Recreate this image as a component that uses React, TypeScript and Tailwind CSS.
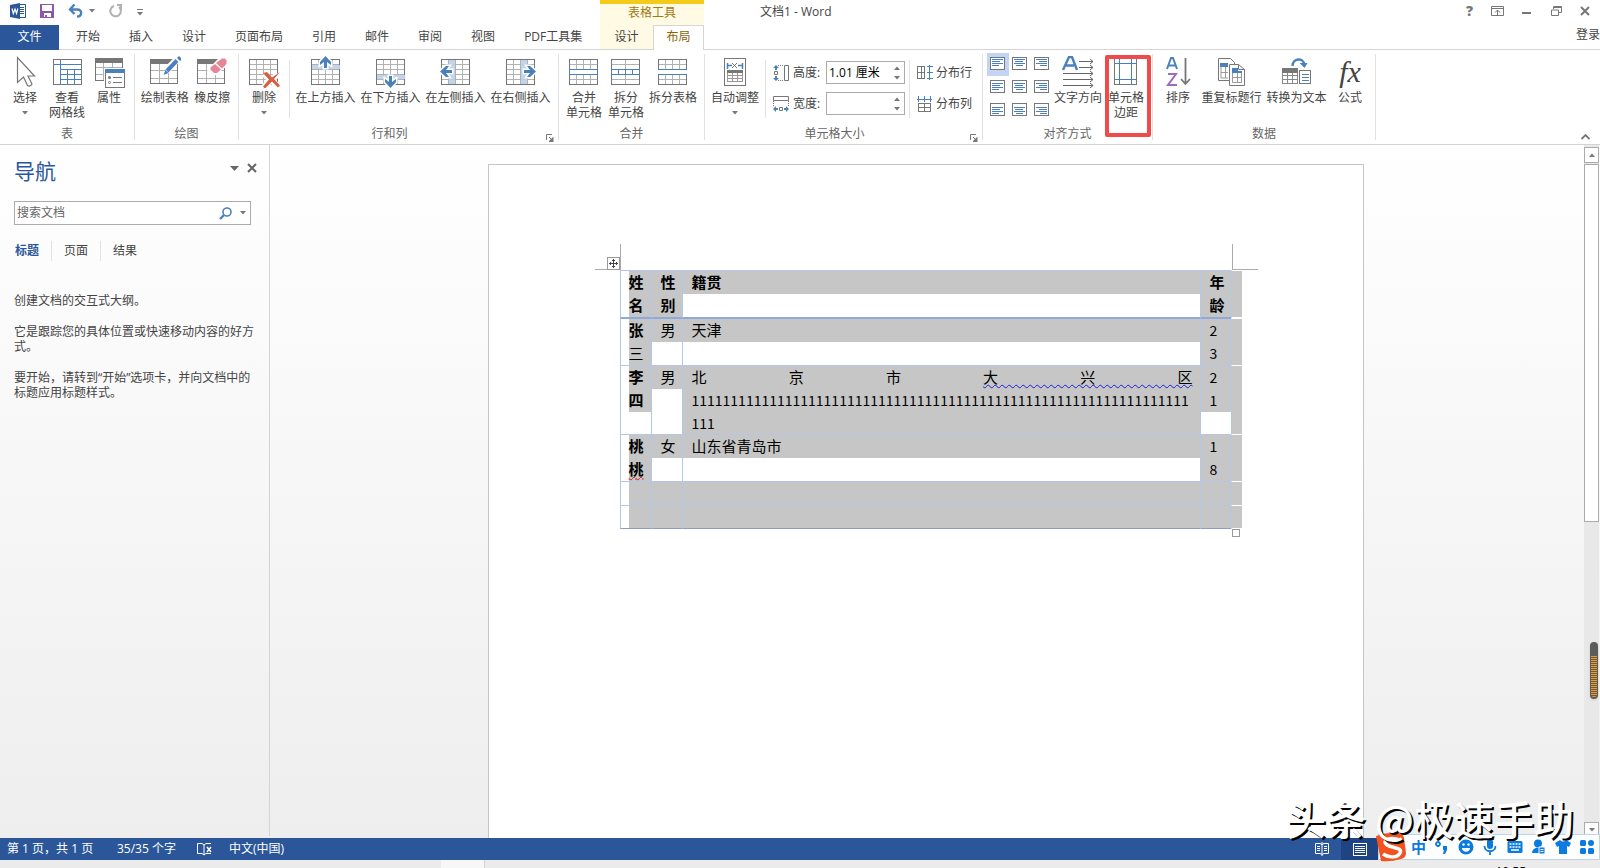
import clsx from "clsx";
import type { ReactNode } from "react";

const uiFont = "font-['Open_Sans','Noto_Sans_CJK_SC',sans-serif]";
const docFont = "font-['Noto_Sans_CJK_SC',sans-serif]";

/* ---------- icons ---------- */

function Icon({ children, size = 32 }: { children: ReactNode; size?: number }) {
  return (
    <svg width={size} height={size} viewBox={`0 0 ${size} ${size}`} fill="none" aria-hidden="true" className="shrink-0">
      {children}
    </svg>
  );
}

function Caret({ className = "" }: { className?: string }) {
  return (
    <svg width="6" height="4" viewBox="0 0 6 4" aria-hidden="true" className={clsx("shrink-0 fill-[#777]", className)}>
      <path d="M0 0h6L3 3.5z" />
    </svg>
  );
}

function Grid() {
  return (
    <g shapeRendering="crispEdges">
      <path d="M8.5 4v25M15.5 4v25M22.5 4v25M2 8.5h28M2 13.5h28M2 18.5h28M2 23.5h28" stroke="#b1b1b1" />
      <rect x="1.5" y="3.5" width="28" height="25" stroke="#777" />
    </g>
  );
}

function SelectIcon() {
  return (
    <Icon>
      <path
        d="M8.5 1.5v25l6-5.500 4 8.500q3 1.500 4.500-1.500l-4-8h6.500z"
        fill="#fff"
        stroke="#777"
        strokeWidth="1.200"
      />
    </Icon>
  );
}

function GridlinesIcon() {
  return (
    <Icon>
      <g shapeRendering="crispEdges">
        <path d="M9.500 9v20M16.500 13v16M23.500 13v16M2 8.500h28M9 13.500h21M9 18.500h21M9 23.500h21" stroke="#4a81bd" />
        <path d="M9.500 4v5" stroke="#4a81bd" />
        <rect x="2.500" y="3.500" width="28" height="25" stroke="#777" />
      </g>
    </Icon>
  );
}

function PropertiesIcon() {
  return (
    <Icon>
      <g shapeRendering="crispEdges">
        <path d="M10.500 6v19M19.500 6v9M2 11.500h27M2 18.500h11" stroke="#b1b1b1" />
        <path d="M13 24.500H2.500V5M29.500 5v8" stroke="#777" />
        <path fill="#777" d="M2 2h28v5H2z" />
        <path fill="#fff" d="M11 12h21v20H11z" />
        <rect x="12.500" y="13.500" width="19" height="18" fill="#fff" stroke="#777" />
        <path fill="#4a81bd" d="M12 13h20v4H12z" />
        <path d="M20 21.500h9M20 26.500h9" stroke="#777" />
      </g>
      <circle cx="16.500" cy="21.500" r="1.500" fill="#777" />
      <circle cx="16.500" cy="26.500" r="1" stroke="#777" />
    </Icon>
  );
}

function HeadedGrid() {
  return (
    <g shapeRendering="crispEdges">
      <path d="M10.500 7v21M19.500 7v21M2 14.500h27M2 22.500h27" stroke="#b1b1b1" />
      <rect x="1.500" y="3.500" width="27" height="24" stroke="#777" />
      <path fill="#777" d="M1 3h28v5H1z" />
    </g>
  );
}

function DrawTableIcon() {
  return (
    <Icon>
      <HeadedGrid />
      <path d="M30.500 1 17 15" stroke="#fff" strokeWidth="7" />
      <path d="M28 4.500 18 15" stroke="#4a81bd" strokeWidth="4" />
      <path d="m30 0 3 3-2 2-3-3zM16.500 14l3 3-5 2z" fill="#4a81bd" />
    </Icon>
  );
}

function EraserIcon() {
  return (
    <Icon>
      <HeadedGrid />
      <path d="M24 1h8v8L20 19h-6l-3-5z" fill="#fff" />
      <path d="M26 2.500h3l1.500 2v3.500l-4.500 4.500-6-5.500z" fill="#e88496" />
      <path d="m19 8 6 5.500-4 3.500h-3l-3.500-3.500v-2z" fill="#e88496" />
    </Icon>
  );
}

function DeleteIcon() {
  return (
    <Icon>
      <Grid />
      <path d="m16 18 15 13M30 18 16 31" stroke="#fff" strokeWidth="6" />
      <path d="m15 17 4-1 5 5.500 8-5.500-6 7 6 6.500-2 2-6-6-7 7-2-2 6-7z" fill="#d9603f" />
    </Icon>
  );
}

function InsertIcon({ dir }: { dir: "up" | "down" | "left" | "right" }) {
  const bands = { up: "M2 9h28v4H2z", down: "M2 19h28v4H2z", left: "M9 4h6v24H9z", right: "M16 4h6v24h-6z" };
  const arrows = {
    up: "M15.500 0 21 6v3l-4-3v6h-3V6l-4 3V6z",
    down: "M15.500 32 21 26v-3l-4 3v-6h-3v6l-4-3v3z",
    left: "M0 15.500 6 10h3L6 14h6v3H6l3 4H6z",
    right: "M31 15.500 25 10h-3l3 4h-6v3h6l-3 4h3z",
  };
  return (
    <Icon>
      <Grid />
      <path d={bands[dir]} fill="#bdd0ea" opacity="0.900" shapeRendering="crispEdges" />
      <path d={arrows[dir]} fill="#4a81bd" stroke="#fff" strokeWidth="3" paintOrder="stroke" />
    </Icon>
  );
}

function MergeIcon() {
  return (
    <Icon>
      <Grid />
      <g shapeRendering="crispEdges">
        <path fill="#fff" d="M1 13h30v6H1z" />
        <path d="M1 13.500h29M1 18.500h29M1.500 13v6M29.500 13v6" stroke="#4a81bd" />
      </g>
    </Icon>
  );
}

function SplitCellsIcon() {
  return (
    <Icon>
      <g shapeRendering="crispEdges">
        <path d="M15.500 4v25M2 8.500h28M2 23.500h28" stroke="#b1b1b1" />
        <rect x="1.500" y="3.500" width="28" height="25" stroke="#777" />
        <path fill="#fff" d="M1 13h30v6H1z" />
        <path d="M1 13.500h29M1 18.500h29M1.500 13v6M8.500 13v6M15.500 13v6M22.500 13v6M29.500 13v6" stroke="#4a81bd" />
      </g>
    </Icon>
  );
}

function SplitTableIcon() {
  return (
    <Icon>
      <g shapeRendering="crispEdges">
        <path d="M8.500 4v9M15.500 4v9M22.500 4v9M2 8.500h28M8.500 19v9M15.500 19v9M22.500 19v9M2 23.500h28" stroke="#b1b1b1" />
        <path d="M1.500 13V3.500h28V13M1.500 19v9.500h28V19" stroke="#777" />
        <path d="M1 13.500h29M1 18.500h29" stroke="#4a81bd" />
      </g>
    </Icon>
  );
}

function AutoFitIcon() {
  return (
    <Icon>
      <rect x="5.500" y="2.500" width="21" height="27" stroke="#777" shapeRendering="crispEdges" />
      <path d="M8.500 7v6M23.500 7v6M9 9.500h4M19 9.500h4" stroke="#4a81bd" strokeWidth="1.500" />
      <path d="m13 7 5 5M18 7l-5 5" stroke="#777" />
      <g shapeRendering="crispEdges">
        <path d="M8.500 16v9.500h15V16M13.500 16v9M18.500 16v9M9 19.500h14M9 22.500h14" stroke="#999" />
        <path fill="#777" d="M8 14h16v3H8z" />
      </g>
    </Icon>
  );
}

function HeightIcon() {
  return (
    <Icon size={16}>
      <path d="M11.500.5h4v15h-4z" stroke="#777" />
      <path d="M5 .5h6M5 15.500h6" stroke="#777" strokeDasharray="1 1" />
      <path d="M3 0 0 3h2v2h2V3h2zM3 16l-3-3h2v-2h2v2h2z" fill="#4a81bd" />
      <path d="M1.500 6.500h3v3h-3z" stroke="#777" />
    </Icon>
  );
}

function WidthIcon() {
  return (
    <Icon size={16}>
      <path d="M.5.5h15v4H.5z" stroke="#777" />
      <path d="M.5 5v6M15.500 5v6" stroke="#777" strokeDasharray="1 1" />
      <path d="m0 13 3-3v2h2v2H3v2zM16 13l-3-3v2h-2v2h2v2z" fill="#4a81bd" />
      <path d="M6.500 11.500h3v3h-3z" stroke="#777" />
    </Icon>
  );
}

function DistributeRowsIcon() {
  return (
    <Icon size={16}>
      <g shapeRendering="crispEdges">
        <path d="M.5 1.500h7v12h-7zM4.500 1v12M0 7.500h8" stroke="#777" />
        <path d="M12.500 0v15M10 1.500h6M10 7.500h6M10 13.500h6" stroke="#4a81bd" />
      </g>
    </Icon>
  );
}

function DistributeColsIcon() {
  return (
    <Icon size={16}>
      <g shapeRendering="crispEdges">
        <path d="M1.500 7.500h12v8h-12zM7.500 7v8M1 11.500h13" stroke="#777" />
        <path d="M0 3.500h15M1.500 0v6M7.500 0v6M13.500 0v6" stroke="#4a81bd" />
      </g>
    </Icon>
  );
}

function AlignIcon({ v, h }: { v: number; h: number }) {
  const lines = [11, 8, 11, 7];
  const top = [2, 3, 4][v];
  return (
    <svg width="15" height="13" viewBox="0 0 15 13" fill="none" shapeRendering="crispEdges" aria-hidden="true">
      <rect x="0.500" y="0.500" width="14" height="12" fill="#fff" stroke="#777" />
      {lines.map((w, i) => {
        const x = h === 0 ? 2 : h === 1 ? (15 - w) / 2 : 13 - w;
        return <rect key={i} x={Math.floor(x)} y={top + i * 2} width={w} height="1" fill="#4a81bd" />;
      })}
    </svg>
  );
}

function TextDirectionIcon() {
  return (
    <Icon>
      <path d="m1 14 6-13h3l5 13M4 9.500h8" stroke="#4a81bd" strokeWidth="2.400" />
      <path d="M17 5.500h14M17 11.500h14M1 17.500h30M1 23.500h30M1 29.500h30" stroke="#666" />
      <path d="m28 3 3 2.500L28 8M28 9l3 2.500-3 2.500M28 15l3 2.500-3 2.500M28 21l3 2.500-3 2.500M28 27l3 2.500-3 2.500" stroke="#666" />
    </Icon>
  );
}

function CellMarginsIcon() {
  return (
    <Icon>
      <g shapeRendering="crispEdges">
        <rect x="4.500" y="2.500" width="22" height="26" stroke="#777" />
        <path d="M9.500 3v25M21.500 3v25M5 7.500h22M5 23.500h22" stroke="#4a81bd" />
      </g>
    </Icon>
  );
}

function SortIcon() {
  return (
    <Icon>
      <path d="m5 13 4-11h2l4 11M7 9.500h7" stroke="#4a81bd" strokeWidth="2" />
      <path d="M6 18h8L6 29h9" stroke="#9b6cc0" strokeWidth="2" />
      <path d="M23.500 2v26M19 23l4.500 5 4.500-5" stroke="#777" strokeWidth="1.800" />
    </Icon>
  );
}

function RepeatHeaderIcon() {
  return (
    <Icon>
      <path d="M2.500 2.500h12l4 4v18h-16z" fill="#fff" stroke="#777" />
      <path d="M5 11v11h7M5 16.500h7M9.500 11v11" stroke="#999" />
      <path fill="#4a81bd" d="M4 7h8v4H4z" />
      <path d="M13.500 8.500h9l6 5v16h-15z" fill="#fff" stroke="#777" />
      <path d="M22.500 8.500v5h6" stroke="#777" />
      <path d="M16.500 16v10.500h9V16M16 21.500h10M21.500 16v10" stroke="#999" />
      <path fill="#4a81bd" d="M16 12h6v3h4v2H16z" />
    </Icon>
  );
}

function ConvertIcon() {
  return (
    <Icon>
      <g shapeRendering="crispEdges">
        <path d="M1.500 12h15v15.500h-15zM6.500 17v10M11.500 17v10M2 19.500h14M2 23.500h14" stroke="#888" />
        <path fill="#777" d="M1 12h16v5H1z" />
        <path d="M18.500 14.500h11v13h-11z" fill="#fff" stroke="#777" />
        <path d="M21 18.500h7M21 21.500h7M21 24.500h7" stroke="#4a81bd" />
      </g>
      <path d="M11.500 10c0-8 11-9 12-1" stroke="#4a81bd" strokeWidth="2.400" />
      <path d="M18.500 7h8l-3 5z" fill="#4a81bd" />
    </Icon>
  );
}

/* ---------- ribbon parts ---------- */

function RibbonButton({
  icon,
  lines,
  width,
  menu,
}: {
  icon: ReactNode;
  lines: string[];
  width: string;
  menu?: boolean;
}) {
  return (
    <button type="button" className={clsx("flex h-full flex-col items-center", width)}>
      {icon}
      <span className="mt-0.5 flex flex-col items-center leading-[15px] whitespace-nowrap">
        {lines.map((l) => (
          <span key={l}>{l}</span>
        ))}
      </span>
      {menu && <Caret className="mt-1.5" />}
    </button>
  );
}

function Group({
  label,
  width,
  launcher,
  children,
}: {
  label: string;
  width: string;
  launcher?: boolean;
  children: ReactNode;
}) {
  return (
    <section aria-label={label} className={clsx("flex shrink-0", width)}>
      <div className="flex min-w-0 flex-1 flex-col">
        <div className="flex h-[76px] px-1 pt-1.5">{children}</div>
        <div className={clsx("relative text-center leading-4 text-[#666]", launcher && "pr-[18px]")}>
          {label}
          {launcher && (
            <button type="button" aria-label={`${label}设置`} className="absolute right-1 bottom-0">
              <svg width="8" height="8" viewBox="0 0 8 8" fill="none" aria-hidden="true">
                <path d="M.5 6V.5H6M3 3l3 3" stroke="#777" />
                <path d="M7.500 3v5H3V7l4-4z" fill="#777" />
              </svg>
            </button>
          )}
        </div>
      </div>
      <span className="my-1 w-px bg-[#e1e1e1]" />
    </section>
  );
}

const Divider = () => <span className="mt-1 mr-[3px] mb-2 ml-1 w-px shrink-0 bg-[#e1e1e1]" />;

function SizeField({ id, label, icon, value }: { id: string; label: string; icon: ReactNode; value: string }) {
  return (
    <div className="flex h-[23px] items-center">
      {icon}
      <label htmlFor={id} className="ml-1 w-[33px] whitespace-nowrap">
        {label}:
      </label>
      <span className="flex h-[23px] w-[79px] items-center border border-[#ababab] bg-white pr-1">
        <input id={id} defaultValue={value} className="w-0 flex-1 pl-0.5 text-black outline-none" />
        <span className="flex flex-col gap-1.5">
          <button type="button" aria-label={`增加${label}`}>
            <Caret className="rotate-180" />
          </button>
          <button type="button" aria-label={`减少${label}`}>
            <Caret />
          </button>
        </span>
      </span>
    </div>
  );
}

const tabs = ["开始", "插入", "设计", "页面布局", "引用", "邮件", "审阅", "视图", "PDF工具集"];

function Header() {
  return (
    <header className="bg-white">
      <div className="flex h-[25px]">
        <div className="flex w-[600px] shrink-0 items-center pb-[3px] pl-2.5">
          <svg width="16" height="16" viewBox="0 0 16 16" aria-hidden="true">
            <path d="M8 1.500h7.500v13H8z" fill="#fff" stroke="#2b579a" />
            <path d="M10 4.500h4M10 6.500h4M10 8.500h4M10 10.500h4" stroke="#2b579a" />
            <path d="M0 2 10 0v16L0 14z" fill="#2b579a" />
            <path d="m2 5.500 1.300 5L5 6l1.500 4.500 1.300-5" fill="none" stroke="#fff" strokeWidth="1.200" />
          </svg>
          <button type="button" aria-label="保存" className="ml-3.5">
            <svg width="14" height="14" viewBox="0 0 14 14" aria-hidden="true">
              <path d="M0 0h14v14H0z" fill="#8e57ab" />
              <path d="M2 1h10v6H2zM4 9h7v4H7v-2H5v2H4z" fill="#fff" />
            </svg>
          </button>
          <button type="button" aria-label="撤消" className="ml-3.5 flex items-center gap-1.5">
            <svg width="15" height="14" viewBox="0 0 15 14" fill="none" aria-hidden="true">
              <path d="M6.500.5 2 5.500l4.500 4.500M2 5.500h7c5.500 0 5.500 7 0 7" stroke="#4a81bd" strokeWidth="2.400" />
            </svg>
            <Caret />
          </button>
          <button type="button" aria-label="重复" className="ml-3.5">
            <svg width="14" height="14" viewBox="0 0 14 14" fill="none" aria-hidden="true">
              <path d="M5 2a5.300 5.300 0 1 0 5 1" stroke="#b1b1b1" strokeWidth="2" />
              <path d="M8 0h5v6H11V2H8z" fill="#b1b1b1" />
            </svg>
          </button>
          <button type="button" aria-label="自定义快速访问工具栏" className="ml-3.5 pt-0.5">
            <span className="mb-0.5 block h-px w-1.5 bg-[#777]" />
            <Caret />
          </button>
        </div>
        <div className="flex w-[104px] shrink-0 items-center justify-center border-t-4 border-[#f5cb1b] bg-[#fffae3] pb-1 text-[#a07a16]">
          表格工具
        </div>
        <h1 className="flex-1 pl-14 leading-6">文档1 - Word</h1>
        <div className="flex items-center gap-[18px] pr-2.5 pb-[3px]">
          <button type="button" aria-label="帮助" className="text-[14px] leading-5 font-extrabold text-[#777]">
            ?
          </button>
          <button type="button" aria-label="功能区显示选项">
            <svg width="13" height="10" viewBox="0 0 13 10" fill="none" aria-hidden="true">
              <path d="M.5.5h12v9H.5zM0 2.500h13M6.500 9V4M4 6.500 6.500 4 9 6.500" stroke="#777" />
            </svg>
          </button>
          <button type="button" aria-label="最小化" className="pt-1">
            <span className="block h-0.5 w-[9px] bg-[#777]" />
          </button>
          <button type="button" aria-label="还原" className="ml-0.5">
            <svg width="11" height="10" viewBox="0 0 11 10" fill="none" aria-hidden="true">
              <path d="M2.500 3V.5h8v6H8M2 1.500h9M.5 4h7v5.500h-7z" stroke="#777" />
            </svg>
          </button>
          <button type="button" aria-label="关闭">
            <svg width="10" height="10" viewBox="0 0 10 10" aria-hidden="true">
              <path d="m1 1 8 8M9 1 1 9" stroke="#777" strokeWidth="2" />
            </svg>
          </button>
        </div>
      </div>
      <nav className="flex h-[25px] border-b border-[#d4d4d4]">
        <button type="button" className="-mb-px w-[59px] bg-[#2b579a] pb-px text-white">
          文件
        </button>
        <div className="flex w-[541px] gap-px pl-[3px]">
          {tabs.map((t) => (
            <button key={t} type="button" className="px-3.5 whitespace-nowrap">
              {t}
            </button>
          ))}
        </div>
        <button type="button" className="w-[53px] bg-[#fffae3]">
          设计
        </button>
        <button
          type="button"
          className="-mb-px w-[51px] border-x border-t border-[#d4d4d4] bg-white pb-0.5 text-[#8a6508]"
        >
          布局
        </button>
        <a href="#login" className="ml-auto w-6 leading-5 whitespace-nowrap">
          登录
        </a>
      </nav>
    </header>
  );
}

function Ribbon() {
  return (
    <div className="flex h-[95px] border-b border-[#d4d4d4] bg-white">
      <Group label="表" width="w-[135px]">
        <RibbonButton icon={<SelectIcon />} lines={["选择"]} width="w-[42px]" menu />
        <RibbonButton icon={<GridlinesIcon />} lines={["查看", "网格线"]} width="w-[42px]" />
        <RibbonButton icon={<PropertiesIcon />} lines={["属性"]} width="w-[42px]" />
      </Group>
      <Group label="绘图" width="w-[104px]">
        <RibbonButton icon={<DrawTableIcon />} lines={["绘制表格"]} width="w-[52px]" />
        <RibbonButton icon={<EraserIcon />} lines={["橡皮擦"]} width="w-[44px]" />
      </Group>
      <Group label="行和列" width="w-[320px]" launcher>
        <RibbonButton icon={<DeleteIcon />} lines={["删除"]} width="w-[42px]" menu />
        <Divider />
        <RibbonButton icon={<InsertIcon dir="up" />} lines={["在上方插入"]} width="w-[65px]" />
        <RibbonButton icon={<InsertIcon dir="down" />} lines={["在下方插入"]} width="w-[65px]" />
        <RibbonButton icon={<InsertIcon dir="left" />} lines={["在左侧插入"]} width="w-[65px]" />
        <RibbonButton icon={<InsertIcon dir="right" />} lines={["在右侧插入"]} width="w-[65px]" />
      </Group>
      <Group label="合并" width="w-[146px]">
        <RibbonButton icon={<MergeIcon />} lines={["合并", "单元格"]} width="w-[42px]" />
        <RibbonButton icon={<SplitCellsIcon />} lines={["拆分", "单元格"]} width="w-[42px]" />
        <RibbonButton icon={<SplitTableIcon />} lines={["拆分表格"]} width="w-[52px]" />
      </Group>
      <Group label="单元格大小" width="w-[278px]" launcher>
        <RibbonButton icon={<AutoFitIcon />} lines={["自动调整"]} width="w-[52px]" menu />
        <Divider />
        <div className="flex flex-col gap-2 pt-[5px] pl-1">
          <SizeField id="row-height" label="高度" icon={<HeightIcon />} value="1.01 厘米" />
          <SizeField id="col-width" label="宽度" icon={<WidthIcon />} value="" />
        </div>
        <Divider />
        <div className="flex flex-col gap-2 pt-[5px] pl-1">
          <button type="button" className="flex h-[23px] items-center gap-[3px] whitespace-nowrap">
            <DistributeRowsIcon />
            分布行
          </button>
          <button type="button" className="flex h-[23px] items-center gap-[3px] whitespace-nowrap">
            <DistributeColsIcon />
            分布列
          </button>
        </div>
      </Group>
      <Group label="对齐方式" width="w-[170px]">
        <div className="-mt-[3px] grid h-[69px] w-[66px] shrink-0 grid-cols-3">
          {[0, 1, 2].map((v) =>
            [0, 1, 2].map((h) => (
              <button
                key={`${v}${h}`}
                type="button"
                aria-label={`${["靠上", "中部", "靠下"][v]}${["左对齐", "居中", "右对齐"][h]}`}
                className={clsx("flex h-[23px] w-[22px] pt-1 pl-[3px]", v + h === 0 && "bg-[#c2d5f2]")}
              >
                <AlignIcon v={v} h={h} />
              </button>
            ))
          )}
        </div>
        <RibbonButton icon={<TextDirectionIcon />} lines={["文字方向"]} width="w-[52px]" />
        <div className="relative ml-px">
          <RibbonButton icon={<CellMarginsIcon />} lines={["单元格", "边距"]} width="w-[44px]" />
          <span className="pointer-events-none absolute -top-px left-px h-[82px] w-[46px] rounded-xs border-4 border-[#f04a4a]" />
        </div>
      </Group>
      <Group label="数据" width="w-[223px]">
        <RibbonButton icon={<SortIcon />} lines={["排序"]} width="w-[42px]" />
        <RibbonButton icon={<RepeatHeaderIcon />} lines={["重复标题行"]} width="w-[65px]" />
        <RibbonButton icon={<ConvertIcon />} lines={["转换为文本"]} width="w-[65px]" />
        <RibbonButton
          icon={
            <span className="h-8 font-['Liberation_Serif',serif] text-[30px] leading-8 text-[#444] italic">fx</span>
          }
          lines={["公式"]}
          width="w-[42px]"
        />
      </Group>
      <button type="button" aria-label="折叠功能区" className="mt-auto mr-2.5 mb-1 ml-auto">
        <svg width="9" height="6" viewBox="0 0 9 6" fill="none" aria-hidden="true">
          <path d="m.5 5 4-4 4 4" stroke="#777" strokeWidth="1.800" />
        </svg>
      </button>
    </div>
  );
}

/* ---------- navigation pane ---------- */

function NavPane() {
  return (
    <aside className="mb-0.5 w-[270px] shrink-0 border-r border-[#d4d4d4] pt-3 pl-3.5">
      <div className="flex h-7 items-center pr-3">
        <h2 className="mr-auto text-[21px] leading-7 text-[#2b579a]">导航</h2>
        <button type="button" aria-label="任务窗格选项" className="mb-1.5">
          <svg width="9" height="5" viewBox="0 0 9 5" aria-hidden="true">
            <path d="M0 0h9L4.500 5z" fill="#666" />
          </svg>
        </button>
        <button type="button" aria-label="关闭导航" className="mb-1.5 ml-2">
          <svg width="10" height="10" viewBox="0 0 10 10" aria-hidden="true">
            <path d="m1 1 8 8M9 1 1 9" stroke="#666" strokeWidth="2" />
          </svg>
        </button>
      </div>
      <div className="mt-4 mr-[18px] flex h-6 items-center border border-[#ababab] bg-white pr-1">
        <input
          aria-label="搜索文档"
          placeholder="搜索文档"
          className="min-w-0 flex-1 pl-0.5 outline-none placeholder:text-[#666]"
        />
        <button type="button" aria-label="搜索">
          <svg width="13" height="13" viewBox="0 0 13 13" fill="none" aria-hidden="true">
            <circle cx="8" cy="5" r="4" stroke="#4a81bd" strokeWidth="1.600" />
            <path d="m5 8-4 4" stroke="#4a81bd" strokeWidth="2.400" />
          </svg>
        </button>
        <Caret className="ml-2" />
      </div>
      <div className="mt-4 flex h-5 items-center">
        <button type="button" className="pr-3 pl-px font-bold text-[#2b579a]">
          标题
        </button>
        <button type="button" className="h-5 border-x border-[#e1e1e1] px-3">
          页面
        </button>
        <button type="button" className="px-3">
          结果
        </button>
      </div>
      <div className="mt-8 flex flex-col gap-4 pr-3 leading-[15px]">
        <p>创建文档的交互式大纲。</p>
        <p>它是跟踪您的具体位置或快速移动内容的好方式。</p>
        <p>要开始，请转到“开始”选项卡，并向文档中的标题应用标题样式。</p>
      </div>
    </aside>
  );
}

/* ---------- document ---------- */

interface LineProps {
  children?: ReactNode;
  off?: boolean;
  flush?: boolean;
  short?: boolean;
  className?: string;
}

// one selected line of a cell; "off" leaves it unselected
function Line({ children, off, flush, short, className }: LineProps) {
  return (
    <div
      className={clsx(
        "leading-[21px] whitespace-nowrap",
        short ? "h-[22px]" : "h-[23px]",
        !flush && "pl-[9px]",
        !off && "bg-[#c6c6c6]",
        className
      )}
    >
      {children}
    </div>
  );
}

function FirstCell({ children }: { children: ReactNode }) {
  return <th className="border-b border-l border-[#b4c7e7] pl-2 text-left align-top font-bold">{children}</th>;
}

function Cell({ children, className }: { children: ReactNode; className?: string }) {
  return <td className={clsx("border-b border-l border-[#b4c7e7] align-top", className)}>{children}</td>;
}

function RowEnd() {
  return <td className="border-b border-l border-b-white border-l-[#b4c7e7] bg-[#c6c6c6]" />;
}

function Digits({ children }: { children: ReactNode }) {
  return <span className="text-[14px]">{children}</span>;
}

const thick = "border-t border-t-[#b4c7e7] border-b-2 border-b-[#8eaadb] border-l border-l-[#b4c7e7]";

function DocTable() {
  return (
    <table
      className={clsx("w-[622px] table-fixed border-separate border-spacing-0 text-[15px] text-black", docFont)}
    >
      <colgroup>
        <col className="w-[31px]" />
        <col className="w-[31px]" />
        <col />
        <col className="w-[31px]" />
        <col className="w-[11px]" />
      </colgroup>
      <thead>
        <tr className="text-left align-top">
          <th className={clsx("pl-2", thick)}>
            <Line flush>姓</Line>
            <Line flush>名</Line>
          </th>
          <th className={thick}>
            <Line>性</Line>
            <Line>别</Line>
          </th>
          <th className={thick}>
            <Line>籍贯</Line>
            <Line off />
          </th>
          <th className={thick}>
            <Line>年</Line>
            <Line>龄</Line>
          </th>
          <td className="border-t border-b-2 border-l border-t-white border-b-white border-l-[#b4c7e7] bg-[#c6c6c6]" />
        </tr>
      </thead>
      <tbody>
        <tr>
          <FirstCell>
            <Line flush>张</Line>
            <Line flush className="font-normal">
              三
            </Line>
          </FirstCell>
          <Cell>
            <Line>男</Line>
            <Line off />
          </Cell>
          <Cell>
            <Line>天津</Line>
            <Line off />
          </Cell>
          <Cell>
            <Line>
              <Digits>2</Digits>
            </Line>
            <Line>
              <Digits>3</Digits>
            </Line>
          </Cell>
          <RowEnd />
        </tr>
        <tr>
          <FirstCell>
            <Line flush>李</Line>
            <Line flush>四</Line>
          </FirstCell>
          <Cell>
            <Line>男</Line>
            <Line off />
          </Cell>
          <Cell>
            <Line className="pr-[7px] [text-align-last:justify]">
              北京市
              <span className="underline decoration-[#1c1cd8] decoration-wavy decoration-1 underline-offset-1">
                大兴区
              </span>
            </Line>
            <Line>
              <Digits>{"1".repeat(64)}</Digits>
            </Line>
            <Line short>
              <Digits>111</Digits>
            </Line>
          </Cell>
          <Cell>
            <Line>
              <Digits>2</Digits>
            </Line>
            <Line>
              <Digits>1</Digits>
            </Line>
          </Cell>
          <RowEnd />
        </tr>
        <tr>
          <FirstCell>
            <Line flush>桃</Line>
            <Line flush>
              <span className="underline decoration-[#d01818] decoration-wavy decoration-1 underline-offset-1">桃</span>
            </Line>
          </FirstCell>
          <Cell>
            <Line>女</Line>
            <Line off />
          </Cell>
          <Cell>
            <Line>山东省青岛市</Line>
            <Line off />
          </Cell>
          <Cell>
            <Line>
              <Digits>1</Digits>
            </Line>
            <Line>
              <Digits>8</Digits>
            </Line>
          </Cell>
          <RowEnd />
        </tr>
        {["border-b-[#b4c7e7]", "border-b-[#8e9dbf]"].map((edge, row) => (
          <tr key={edge}>
            {[0, 1, 2, 3].map((c) => (
              <td key={c} className={clsx("border-b border-l border-l-[#b4c7e7]", edge, c === 0 && "pl-2")}>
                <Line short={row === 1} />
              </td>
            ))}
            <RowEnd />
          </tr>
        ))}
      </tbody>
    </table>
  );
}

function Page() {
  return (
    <article className="w-[876px] shrink-0 border-x border-t border-[#c6c6c6] bg-white">
      <div className="flex h-[105px] items-end pl-[106px]">
        <span className="relative h-[26px] w-[26px] border-r border-b border-[#ababab]">
          <button
            type="button"
            aria-label="移动表格"
            className="absolute right-0 -bottom-px flex h-[13px] w-[13px] items-center justify-center border border-[#999] bg-white"
          >
            <svg width="9" height="9" viewBox="0 0 9 9" fill="none" aria-hidden="true">
              <path d="M4.500 0v9M0 4.500h9M3 1.500h3M3 7.500h3M1.500 3v3M7.500 3v3" stroke="#444" />
            </svg>
          </button>
        </span>
        <span className="ml-[611px] h-[26px] w-[26px] border-b border-l border-[#ababab]" />
      </div>
      <div className="w-[753px] pl-[131px]">
        <DocTable />
        <span className="mr-0.5 ml-auto block h-2 w-2 border border-[#999]" />
      </div>
    </article>
  );
}

function ScrollBar() {
  const arrow = "flex h-4 shrink-0 items-center justify-center border border-[#ababab] bg-white";
  return (
    <div className="mr-px flex w-[15px] shrink-0 flex-col bg-[#e8e8e8] pt-0.5">
      <button type="button" aria-label="向上滚动" className={arrow}>
        <Caret className="rotate-180" />
      </button>
      <div className="flex min-h-0 flex-1 flex-col pt-px">
        <div className="flex-[19] border border-[#ababab] bg-white" />
        <div className="flex-[16]" />
      </div>
      <button type="button" aria-label="向下滚动" className={arrow}>
        <Caret />
      </button>
    </div>
  );
}

/* ---------- status bar and floating tools ---------- */

function StatusBar() {
  return (
    <footer className="flex h-[22px] shrink-0 items-center bg-[#2b579a] pl-[7px] text-white">
      <span className="w-[110px]">第 1 页，共 1 页</span>
      <span className="w-20">35/35 个字</span>
      <svg width="15" height="13" viewBox="0 0 15 13" fill="none" aria-hidden="true">
        <path d="M7 2 5 .5H.5v10H5L7 12l2-1.500h5M7 2v10M7 2 9 .5h5" stroke="#fff" />
        <path d="m10 4 4 5M14 4l-4 5" stroke="#fff" strokeWidth="1.500" />
      </svg>
      <span className="ml-[17px]">中文(中国)</span>
      <button type="button" aria-label="阅读视图" className="mr-3 ml-auto">
        <svg width="14" height="14" viewBox="0 0 14 14" fill="none" aria-hidden="true">
          <path
            d="M7 2.500 5 1.500H.5v10H5l2 1 2-1h4.500v-10H9zM7 0v14M2 4.500h3M2 6.500h3M2 8.500h3M9 4.500h3M9 6.500h3M9 8.500h3"
            stroke="#fff"
          />
        </svg>
      </button>
      <button
        type="button"
        aria-label="页面视图"
        className="mr-[222px] flex h-full w-[37px] items-center justify-center bg-[#1e4484]"
      >
        <svg width="14" height="13" viewBox="0 0 14 13" fill="none" shapeRendering="crispEdges" aria-hidden="true">
          <path d="M.5.5h13v12H.5zM2 3.500h10M2 5.500h10M2 7.500h10M2 9.500h10" stroke="#fff" />
        </svg>
      </button>
    </footer>
  );
}

const imeTools: { name: string; art: ReactNode }[] = [
  {
    name: "标点",
    art: (
      <>
        <circle cx="4" cy="5" r="2" fill="none" stroke="#0a7be0" strokeWidth="1.800" />
        <path d="M9 7h4v4l-2 4H9l1-4H9z" />
      </>
    ),
  },
  {
    name: "表情",
    art: (
      <>
        <circle cx="8" cy="8" r="7.500" />
        <path d="M4 9h8c0 5-8 5-8 0z" fill="#fff" />
        <circle cx="5.500" cy="5.500" r="1.200" fill="#fff" />
        <circle cx="10.500" cy="5.500" r="1.200" fill="#fff" />
      </>
    ),
  },
  {
    name: "语音",
    art: (
      <>
        <rect x="5" y="0" width="6" height="10" rx="3" />
        <path d="M2.500 7c0 7 11 7 11 0M8 12v4" fill="none" stroke="#0a7be0" strokeWidth="1.800" />
      </>
    ),
  },
  {
    name: "键盘",
    art: (
      <>
        <rect x="0.500" y="2" width="15" height="12" rx="1.500" />
        <path d="M2.500 5h2m1 0h2m1 0h2m1 0h2M2.500 8h2m1 0h2m1 0h2m1 0h2M4 11h8" stroke="#fff" strokeWidth="1.500" />
      </>
    ),
  },
  {
    name: "用户",
    art: (
      <>
        <circle cx="7" cy="4.500" r="4" />
        <path d="M1 14c0-7 12-7 12 0z" />
        <path d="M8 8h6v7H8z" stroke="#fff" />
        <path d="M9.500 10.500h3M9.500 12.500h3" stroke="#fff" />
      </>
    ),
  },
  { name: "皮肤", art: <path d="M5 1q3 3 6 0l5 3-2 4-2-1v8H4V7L2 8 0 4z" /> },
  {
    name: "工具箱",
    art: (
      <>
        <rect x="1" y="1" width="6" height="6" rx="1.500" />
        <rect x="9" y="1" width="6" height="6" rx="3" />
        <rect x="1" y="9" width="6" height="6" rx="1.500" />
        <rect x="9" y="9" width="6" height="6" rx="1.500" />
      </>
    ),
  },
];

function ImeBar() {
  return (
    <div className="absolute right-0 bottom-2 flex h-[26px] w-[222px] items-center border border-[#b9d3f0] bg-white">
      <svg width="32" height="30" viewBox="0 0 32 30" fill="none" className="-ml-1 shrink-0" aria-hidden="true">
        <path d="M1 4Q12 0 24 1q4 0 5 5l2 15q0 5-5 6Q16 30 6 29z" fill="#f4511e" />
        <path d="M25 8C14 4 6 9 12 13s16 2 13 8-13 4-17 1" stroke="#fff" strokeWidth="3.500" />
      </svg>
      <div className="flex flex-1 items-center justify-between pr-1 pl-1">
        <button type="button" className="text-[15px] leading-5 font-bold text-[#0a7be0]">
          中
        </button>
        {imeTools.map(({ name, art }) => (
          <button key={name} type="button" aria-label={name}>
            <svg width="16" height="16" viewBox="0 0 16 16" className="fill-[#0a7be0]" aria-hidden="true">
              {art}
            </svg>
          </button>
        ))}
      </div>
    </div>
  );
}

function LevelMeter() {
  return (
    <div className="absolute right-0.5 bottom-[169px] h-[57px] w-2 rounded-full bg-[#5c5c5c] px-px pt-3.5 pb-0.5 shadow">
      <div className="h-full rounded-b-full bg-[repeating-linear-gradient(to_bottom,#f59a1d_0_1px,#5c5c5c_1px_2px)]" />
    </div>
  );
}

export default function App() {
  return (
    <div className={clsx("relative flex h-screen flex-col overflow-hidden bg-white text-[12px] text-[#444]", uiFont)}>
      <Header />
      <Ribbon />
      <div className="flex min-h-0 flex-1 bg-linear-to-b from-white to-[#eeeeee]">
        <NavPane />
        <main className="flex min-w-0 flex-1 justify-center pt-[19px] pr-[3px]">
          <Page />
        </main>
        <ScrollBar />
      </div>
      <StatusBar />
      <div className="flex h-2 shrink-0 overflow-hidden bg-[#ebebeb]">
        <span className="ml-[441px] w-11 border-r border-[#d4d4d4] bg-[#f7f7f7]" />
        <span className="mr-[74px] ml-auto pt-1 leading-4 text-black">10:55</span>
      </div>
      <ImeBar />
      <LevelMeter />
      <p
        className={clsx(
          "pointer-events-none absolute right-[26px] bottom-7 text-[40px] leading-[44px] font-medium whitespace-nowrap text-white [text-shadow:2px_2px_0_#000]",
          docFont
        )}
      >
        头条 @极速手助
      </p>
    </div>
  );
}
